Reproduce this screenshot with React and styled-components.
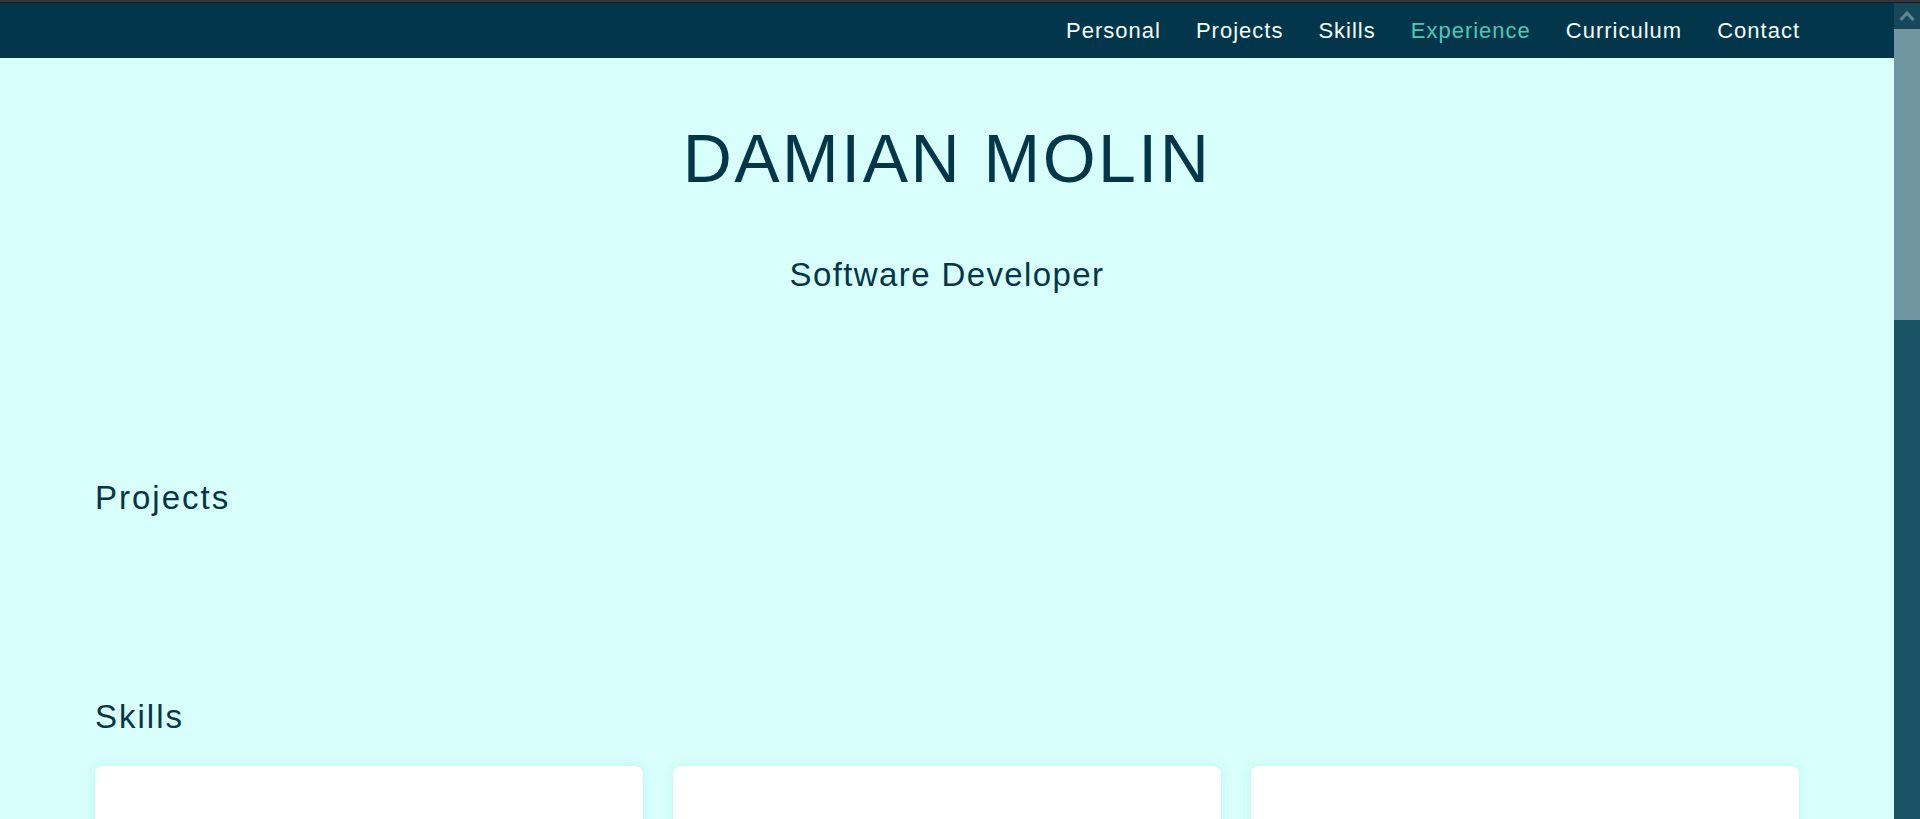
import React from "react";
import styled, { createGlobalStyle } from "styled-components";

const GlobalStyle = createGlobalStyle`
  html, body {
    margin: 0;
    padding: 0;
    height: 100%;
    overflow: hidden;
  }
  body {
    font-family: "Liberation Sans", Arial, sans-serif;
    background: #d8fffb;
  }
  *, *::before, *::after { box-sizing: border-box; }
`;

const Shell = styled.div`
  height: 100vh;
  display: flex;
  flex-direction: column;
`;

const WindowEdge = styled.div`
  flex: none;
  height: 3px;
  background: #34363a;
  border-bottom: 1px solid #1b1c1e;
`;

const Viewport = styled.div`
  flex: 1;
  min-height: 0;
  display: flex;
`;

const Page = styled.main`
  flex: 1;
  min-width: 0;
  overflow: hidden;
  background: #d8fffb;
`;

const ScrollRail = styled.div`
  flex: none;
  width: 26px;
  display: flex;
  flex-direction: column;
  background: #1a5266;
`;

const ScrollButton = styled.div`
  height: 26px;
  background: #17475a;
  display: flex;
  align-items: center;
  justify-content: center;
`;

const ScrollThumb = styled.div`
  height: 291px;
  background: #7096a2;
`;

const NavBar = styled.nav`
  height: 55px;
  background: #03364a;
  display: flex;
  justify-content: flex-end;
  align-items: center;
  gap: 35px;
  padding: 0 94px;
`;

const NavLink = styled.a`
  font-size: 22px;
  line-height: 55px;
  letter-spacing: 1px;
  color: ${(p) => (p.$active ? "#4fc7b7" : "#f2fffd")};
  text-decoration: none;
  cursor: pointer;
`;

const Hero = styled.header`
  display: flex;
  flex-direction: column;
  align-items: center;
  padding: 59px 0 183px;
`;

const Name = styled.h1`
  margin: 0;
  font-size: 68px;
  font-weight: 400;
  line-height: 82px;
  letter-spacing: 2.5px;
  color: #04364a;
`;

const Role = styled.p`
  margin: 56px 0 0;
  font-size: 33px;
  line-height: 40px;
  letter-spacing: 1.4px;
  color: #04364a;
`;

const Section = styled.section`
  display: flex;
  flex-direction: column;
  gap: 29px;
  padding: 0 95px 150px;
`;

const SectionTitle = styled.h2`
  margin: 0;
  font-size: 33px;
  font-weight: 400;
  line-height: 40px;
  letter-spacing: 2px;
  color: #04364a;
`;

const EmptyList = styled.div`
  min-height: 0;
`;

const CardGrid = styled.div`
  display: grid;
  grid-template-columns: repeat(3, 1fr);
  gap: 30px;
`;

const Card = styled.div`
  height: 420px;
  background: #ffffff;
  border-radius: 8px;
  box-shadow: 0 0 12px rgba(40, 190, 175, 0.16);
`;

const links = ["Personal", "Projects", "Skills", "Experience", "Curriculum", "Contact"];

export default function App() {
  return (
    <>
      <GlobalStyle />
      <Shell>
        <WindowEdge />
        <Viewport>
          <Page>
            <NavBar>
              {links.map((l) => (
                <NavLink key={l} $active={l === "Experience"}>
                  {l}
                </NavLink>
              ))}
            </NavBar>
            <Hero>
              <Name>DAMIAN MOLIN</Name>
              <Role>Software Developer</Role>
            </Hero>
            <Section>
              <SectionTitle>Projects</SectionTitle>
              <EmptyList />
            </Section>
            <Section>
              <SectionTitle>Skills</SectionTitle>
              <CardGrid>
                <Card />
                <Card />
                <Card />
              </CardGrid>
            </Section>
          </Page>
          <ScrollRail>
            <ScrollButton>
              <svg width="26" height="26" viewBox="0 0 26 26">
                <path d="M6.5 17 L13 10 L19.5 17" fill="none" stroke="#5e8795" strokeWidth="3.2" />
              </svg>
            </ScrollButton>
            <ScrollThumb />
          </ScrollRail>
        </Viewport>
      </Shell>
    </>
  );
}
